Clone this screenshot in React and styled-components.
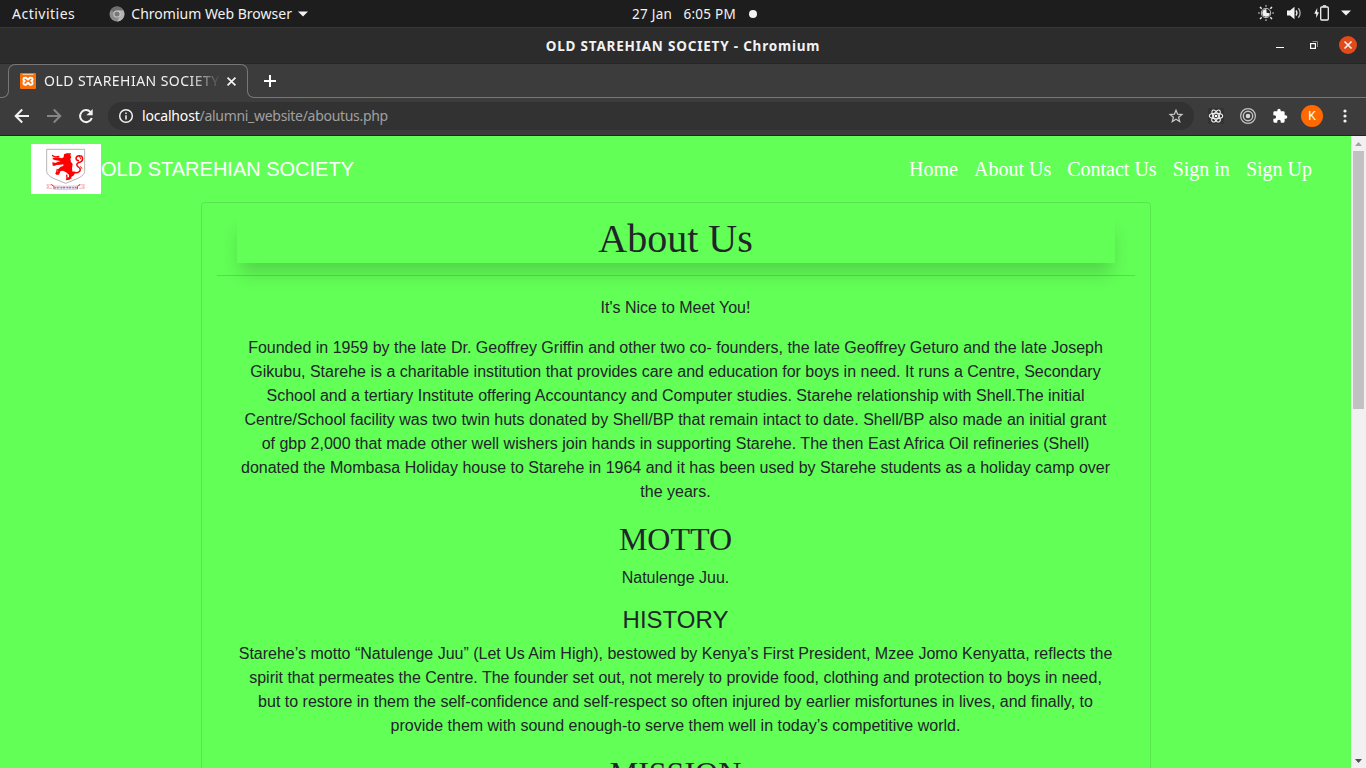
import React from "react";
import styled, { createGlobalStyle } from "styled-components";

const GREEN = "#62ff57";
const UI = '"Noto Sans", "Open Sans", sans-serif';
const SANS = '"Liberation Sans", Arial, sans-serif';
const SERIF = '"Liberation Serif", "Times New Roman", serif';

const GlobalStyle = createGlobalStyle`
  *, *::before, *::after { box-sizing: border-box; }
  body { margin: 0; overflow: hidden; background: #3c3c3c; }
`;

const Desktop = styled.div`
  width: 1366px;
  height: 768px;
  display: flex;
  flex-direction: column;
  overflow: hidden;
  font-family: ${UI};
`;

const Label = styled.span`
  font-size: ${(p) => p.$size || 14}px;
  letter-spacing: ${(p) => p.$track || 0}px;
  font-weight: ${(p) => (p.$bold ? 700 : 400)};
  color: ${(p) => p.$color || "#f2f2f2"};
  white-space: pre;
  line-height: 20px;
`;

const Svg = styled.svg`
  display: block;
  flex: none;
  overflow: visible;
`;

const SystemBar = styled.header`
  height: 28px;
  flex: none;
  display: grid;
  grid-template-columns: 1fr auto 1fr;
  align-items: center;
  background: #1d1d1d;
  border-bottom: 1px solid #373737;
  padding: 0 15px 0 12px;
`;

const AppMenu = styled.div`
  display: flex;
  align-items: center;
`;

const AppName = styled.div`
  display: flex;
  align-items: center;
  gap: 6px;
  margin-left: 34px;
`;

const Clock = styled.div`
  display: flex;
  align-items: center;
  gap: 13px;
  padding-left: 26px;
`;

const Dot = styled.i`
  width: 8px;
  height: 8px;
  border-radius: 50%;
  background: #f2f2f2;
`;

const Tray = styled.div`
  display: flex;
  align-items: center;
  justify-content: flex-end;
  gap: 12px;
  padding-bottom: 1px;
`;

const TitleBar = styled.div`
  height: 36px;
  flex: none;
  display: grid;
  grid-template-columns: 1fr auto 1fr;
  align-items: center;
  background: #2c2c2c;
  border-bottom: 1px solid #252525;
`;

const WindowControls = styled.div`
  display: flex;
  align-items: center;
  justify-content: flex-end;
  gap: 21px;
  padding: 0 9px 1px 0;
`;

const MinimizeButton = styled.div`
  margin-right: 5px;
`;

const CloseButton = styled.div`
  width: 18px;
  height: 18px;
  border-radius: 50%;
  background: #e24a19;
  display: grid;
  place-items: center;
`;

const TabStrip = styled.div`
  height: 34px;
  flex: none;
  display: flex;
  background: #3c3c3c;
`;

const TabFoot = styled.i`
  align-self: flex-end;
  flex: none;
  width: ${(p) => (p.$side === "left" ? 9 : 8)}px;
  height: 8px;
  border-bottom: 1px solid #777;
  border-${(p) => (p.$side === "left" ? "right" : "left")}: 1px solid #777;
  border-bottom-${(p) => (p.$side === "left" ? "right" : "left")}-radius: 7px;
`;

const Tab = styled.div`
  flex: none;
  width: 240px;
  height: 26px;
  margin: 0 -1px;
  border: 1px solid #777;
  border-bottom: 0;
  border-radius: 7px 7px 0 0;
`;

const TabContent = styled.div`
  height: 32px;
  display: flex;
  align-items: center;
  padding: 0 10px 0 11px;
`;

const TabTitle = styled.div`
  flex: none;
  display: flex;
  width: 176px;
  margin: 0 7px 0 8px;
  overflow: hidden;
  -webkit-mask-image: linear-gradient(to right, #000 145px, transparent 177px);
  mask-image: linear-gradient(to right, #000 145px, transparent 177px);
`;

const StripRest = styled.div`
  flex: 1;
  display: flex;
  align-items: center;
  padding-left: 9px;
  border-bottom: 1px solid #777;
`;

const Toolbar = styled.div`
  height: 38px;
  flex: none;
  display: flex;
  align-items: center;
  background: #3c3c3c;
  border-bottom: 1px solid #242424;
  padding: 0 19px 1px 14px;
`;

const NavButtons = styled.div`
  display: flex;
  gap: 16px;
  margin-right: 14px;
`;

const AddressBar = styled.div`
  flex: 1;
  height: 28px;
  border-radius: 14px;
  background: #323232;
  display: flex;
  align-items: center;
  padding: 0 10px;
`;

const Url = styled.div`
  flex: 1;
  display: flex;
  margin-left: 8px;
`;

const Extensions = styled.div`
  display: flex;
  align-items: center;
  gap: 16px;
  margin-left: 14px;
`;

const Avatar = styled.div`
  width: 22px;
  height: 22px;
  border-radius: 50%;
  background: #ff6900;
  color: #fff;
  font: 12px/22px Roboto, sans-serif;
  text-align: center;
  margin: 0 4px 0 -3px;
`;

const Viewport = styled.div`
  flex: 1;
  min-height: 0;
  display: flex;
`;

const Page = styled.main`
  flex: 1;
  overflow: hidden;
  background: ${GREEN};
  font: 16px/24px ${SANS};
  color: #212529;
`;

const Navbar = styled.nav`
  height: 66px;
  display: flex;
  align-items: center;
  padding: 0 39px 0 31px;
`;

const Logo = styled.div`
  width: 70px;
  height: 50px;
  background: #fff;
`;

const Brand = styled.div`
  flex: 1;
  font-size: 20px;
  line-height: 30px;
  color: #fff;
`;

const NavLinks = styled.div`
  display: flex;
  gap: 16px;
  font-family: ${SERIF};
  font-size: 20px;
  line-height: 30px;
  color: #fff;
`;

const Card = styled.section`
  width: 950px;
  height: 900px;
  margin: 0 auto;
  border: 1px solid rgba(0, 0, 0, 0.1);
  border-radius: 4px;
  padding: 12px 15px;
  text-align: center;
`;

const PageTitle = styled.h1`
  margin: 0 20px;
  font: 400 40px/48px ${SERIF};
  box-shadow: 0 13px 18px -3px rgba(0, 0, 0, 0.17);
`;

const Rule = styled.hr`
  margin: 12px 0 20px;
  border: 0;
  border-top: 1px solid rgba(0, 0, 0, 0.13);
`;

const Copy = styled.div`
  margin: 0 20px;
`;

const Paragraph = styled.p`
  margin: 0 0 16px;
`;

const Heading = styled.h2`
  margin: 0 0 8px;
  font: 400 32px/38.4px ${SERIF};
`;

const SubHeading = styled.h4`
  margin: 0 0 7px;
  font: 400 24px/28.8px ${SANS};
`;

const Scrollbar = styled.div`
  width: 15px;
  background: #f1f1f1;
  display: flex;
  flex-direction: column;
  align-items: center;
`;

const ScrollArrow = styled.div`
  height: 15px;
  display: grid;
  place-items: center;
`;

const ScrollThumb = styled.div`
  width: 11px;
  height: 258px;
  margin-bottom: auto;
  background: #c1c1c1;
`;

const Caret = () => (
  <Svg width="10" height="6" viewBox="0 0 10 6"><path d="M0 .5h10L5 5.5z" fill="#f2f2f2" /></Svg>
);

const ChromiumIcon = () => (
  <Svg width="16" height="16" viewBox="0 0 16 16">
    <circle cx="8" cy="8" r="7.5" fill="#8b8b8b" />
    <path d="M8 8 1.5 4.2A7.5 7.5 0 0 1 14.5 4.5H8z" fill="#6e6e6e" />
    <path d="M8 4.5h6.5A7.5 7.5 0 0 1 8 15.5L11 10z" fill="#b4b4b4" />
    <circle cx="8" cy="8" r="3.6" fill="#cfcfcf" />
    <circle cx="8" cy="8" r="2.6" fill="#777" />
  </Svg>
);

const NightLightIcon = () => (
  <Svg width="16" height="16" viewBox="0 0 16 16" fill="none">
    <path d="M8 0v1.8M8 14.2V16M0 8h1.8M14.2 8H16" stroke="#999" strokeWidth="1.6" />
    <path d="m2 2 1.7 1.7M14 2l-1.700 1.700M2 14l1.700-1.700M14 14l-1.700-1.700" stroke="#eee" strokeWidth="1.5" />
    <circle cx="8" cy="8" r="4.7" stroke="#c4c4c4" strokeWidth="1" />
    <path d="M8 8V4.200A3.800 3.800 0 1 0 11.800 8.800z" fill="#f2f2f2" />
    <path d="M8 4.500v3.700l3.500.5" stroke="#f2f2f2" strokeWidth="1" />
  </Svg>
);

const VolumeIcon = () => (
  <Svg width="16" height="14" viewBox="0 0 16 14" fill="none">
    <path d="M1 4.5h3L8.500.8v12.400L4 9.500H1z" fill="#f2f2f2" />
    <path d="M10 4.500a4 4 0 0 1 0 5" stroke="#f2f2f2" strokeWidth="1.3" />
    <path d="M12.300 2.300a7 7 0 0 1 0 9.400" stroke="#b5b5b5" strokeWidth="1.3" />
  </Svg>
);

const BatteryIcon = () => (
  <Svg width="15" height="16" viewBox="0 0 15 16" fill="none">
    <path d="M3.200 3 .2 8.800h2V13L5 7.300H3.200z" fill="#f2f2f2" />
    <rect x="6.700" y="2" width="7.600" height="13" rx="1" stroke="#f2f2f2" strokeWidth="1.3" />
    <path d="M8.800.9h3.400" stroke="#f2f2f2" strokeWidth="1.4" />
  </Svg>
);

const MinimizeIcon = () => (
  <Svg width="8" height="8" viewBox="0 0 8 8"><path d="M0 6h8v1H0z" fill="#fff" /></Svg>
);

const RestoreIcon = () => (
  <Svg width="8" height="8" viewBox="0 0 8 8" fill="none">
    <path d="M2.500.5h5v5.500" stroke="#8c8c8c" />
    <rect x=".6" y="2.600" width="4.800" height="4.800" stroke="#fff" strokeWidth="1.2" />
  </Svg>
);

const CloseIcon = ({ size, width }) => (
  <Svg width={size} height={size} viewBox="0 0 8 8">
    <path d="m.5.5 7 7M7.500.5l-7 7" stroke="#f4f4f4" strokeWidth={width} />
  </Svg>
);

const XamppIcon = () => (
  <Svg width="16" height="16" viewBox="0 0 16 16" fill="none">
    <rect width="16" height="16" rx="1" fill="#f96f08" />
    <path d="M2.500 1.500h11" stroke="#ffc48e" />
    <path d="M5 4.700C3 4.700 3 7 4.500 8 3 9 3 11.800 5 11.800h.5C7 11.800 7 9.800 8 9.800s1 2 2.500 2h.5c2 0 2-2.800.5-3.800 1.500-1 1.500-3.300-.5-3.300h-.5C9 4.700 9 6.500 8 6.500s-1-1.800-2.500-1.800z" stroke="#fff" strokeWidth="2" />
  </Svg>
);

const PlusIcon = () => (
  <Svg width="12" height="12" viewBox="0 0 12 12"><path d="M6 0v12M0 6h12" stroke="#fff" strokeWidth="2" /></Svg>
);

const ArrowIcon = ({ color, flip }) => (
  <Svg width="16" height="16" viewBox="0 0 16 16" fill="none">
    <path d={flip ? "M1 8h13M7.800 1.500 14.300 8l-6.500 6.500" : "M15 8H2M8.200 1.500 1.700 8l6.500 6.500"} stroke={color} strokeWidth="2" />
  </Svg>
);

const ReloadIcon = () => (
  <Svg width="16" height="16" viewBox="0 0 16 16" fill="none">
    <path d="M13.800 10A6 6 0 1 1 12.400 3.900" stroke="#f2f2f2" strokeWidth="2" />
    <path d="M14.700 1v6.300H8.400z" fill="#f2f2f2" />
  </Svg>
);

const InfoIcon = () => (
  <Svg width="16" height="16" viewBox="0 0 16 16" fill="none">
    <circle cx="8" cy="8" r="6.3" stroke="#f2f2f2" strokeWidth="1.5" />
    <path d="M8 7.200v4.200M8 4.400v1.500" stroke="#f2f2f2" strokeWidth="1.5" />
  </Svg>
);

const StarIcon = () => (
  <Svg width="16" height="16" viewBox="0 0 16 16" fill="none">
    <path d="m8 2.200 1.600 4 4.300.3-3.300 2.800 1.100 4.200L8 11.200l-3.700 2.300 1.100-4.200-3.300-2.800 4.300-.3z" stroke="#c4c4c4" strokeWidth="1.3" />
  </Svg>
);

const ReactIcon = () => (
  <Svg width="16" height="16" viewBox="0 0 16 16" fill="none">
    <rect width="16" height="16" fill="#333" />
    <g stroke="#f0f0f0" strokeWidth="1.1">
      <ellipse cx="8" cy="8" rx="6.7" ry="2.7" />
      <ellipse cx="8" cy="8" rx="6.7" ry="2.7" transform="rotate(60 8 8)" />
      <ellipse cx="8" cy="8" rx="6.7" ry="2.7" transform="rotate(120 8 8)" />
    </g>
    <circle cx="8" cy="8" r="1.3" fill="#fff" />
  </Svg>
);

const TargetIcon = () => (
  <Svg width="16" height="16" viewBox="0 0 16 16" fill="none" stroke="#c4c4c4">
    <circle cx="8" cy="8" r="7.4" strokeWidth="1.2" />
    <circle cx="8" cy="8" r="4.7" strokeWidth="1.4" />
    <circle cx="8" cy="8" r="2.3" fill="#d5d5d5" stroke="none" />
  </Svg>
);

const PuzzleIcon = () => (
  <Svg width="16" height="16" viewBox="0 0 24 24">
    <path d="M20.500 11H19V7a2 2 0 0 0-2-2h-4V3.500a2.500 2.500 0 0 0-5 0V5H4a2 2 0 0 0-2 2v3.800h1.500a2.700 2.700 0 0 1 0 5.400H2V20a2 2 0 0 0 2 2h3.800v-1.500a2.700 2.700 0 0 1 5.400 0V22H17a2 2 0 0 0 2-2v-4h1.500a2.500 2.500 0 0 0 0-5z" fill="#fff" />
  </Svg>
);

const MoreIcon = () => (
  <Svg width="4" height="14" viewBox="0 0 4 14" fill="#f2f2f2">
    <circle cx="2" cy="2" r="1.6" /><circle cx="2" cy="7" r="1.6" /><circle cx="2" cy="12" r="1.6" />
  </Svg>
);

const Crest = () => (
  <Svg width="70" height="50" viewBox="-27 0 210 150" fill="none">
    <path d="M20 16h114v66q0 11-20 21l-37 15-37-15q-20-10-20-21z" stroke="#8f8f8f" strokeWidth="2" />
    <path d="M72 31l8-3h13l-2 7 3 4-3 6 2 9 5 6-2 12 1 10 8 4-3 8-8 5-5 8-12 2 2-6 8-4 0-7-9-7-9-5-8 2-4 10-8 0-4-5 8-3 1-8 8-8 8-2 0-5-9 1-11 1-8 3-6-3 4-4 9-2 12-6-14-2-9-3 0-5 10 1 5-2 12 3 6-3z" fill="#f00" />
    <g stroke="#f00" strokeWidth="4">
      <path d="M36 34l10 5 12-2M37 57l11 2 8-5M52 75l-2 10 7 3M80 92l1 10M90 97l3 7" />
      <path d="M100 84q12 6 19-2 5-7-4-13-9-7 0-13 13-3 13-12-1-9-8-9-11-1-12 8 0 7 9 7" strokeWidth="4.5" />
      <path d="M118 36l5 10M121 67l5 7" strokeWidth="3" />
    </g>
    <path d="M20 123l18-1M20 132l16 1M20 123l6 5-6 4M134 123l-18-1M134 132l-16 1M134 123l-6 5 6 4" stroke="#ef8585" strokeWidth="2" />
    <path d="M34 122l8 5v8M120 122l-8 5v8" stroke="#e11d2b" strokeWidth="3" />
    <path d="M38 125q39 4 78 0M40 136q37 2 74 0" stroke="#eba9ae" strokeWidth="2" />
    <path d="M44 131h66" stroke="#8a84c4" strokeWidth="5" strokeDasharray="4 1.5 7 2 3 1" />
  </Svg>
);

const links = ["Home", "About Us", "Contact Us", "Sign in", "Sign Up"];

export default function App() {
  return (
    <Desktop>
      <GlobalStyle />
      <SystemBar>
        <AppMenu>
          <Label $size={14} $track={0.5}>Activities</Label>
          <AppName>
            <ChromiumIcon />
            <Label $size={14}>Chromium Web Browser</Label>
            <Caret />
          </AppName>
        </AppMenu>
        <Clock>
          <Label $size={13.5} $track={0.25}>27 Jan{"  "} 6:05 PM</Label>
          <Dot />
        </Clock>
        <Tray>
          <NightLightIcon />
          <VolumeIcon />
          <BatteryIcon />
          <Caret />
        </Tray>
      </SystemBar>
      <TitleBar>
        <span />
        <Label $bold $size={13.5} $track={0.8}>OLD STAREHIAN SOCIETY - Chromium</Label>
        <WindowControls>
          <MinimizeButton><MinimizeIcon /></MinimizeButton>
          <RestoreIcon />
          <CloseButton><CloseIcon size={8} width={1.6} /></CloseButton>
        </WindowControls>
      </TitleBar>
      <TabStrip>
        <TabFoot $side="left" />
        <Tab>
          <TabContent>
            <XamppIcon />
            <TabTitle><Label $size={14} $track={0.45}>OLD STAREHIAN SOCIETY</Label></TabTitle>
            <CloseIcon size={9} width={1.5} />
          </TabContent>
        </Tab>
        <TabFoot $side="right" />
        <StripRest><PlusIcon /></StripRest>
      </TabStrip>
      <Toolbar>
        <NavButtons>
          <ArrowIcon color="#f2f2f2" />
          <ArrowIcon color="#858585" flip />
          <ReloadIcon />
        </NavButtons>
        <AddressBar>
          <InfoIcon />
          <Url>
            <Label $size={14} $track={-0.18} $color="#fff">localhost</Label>
            <Label $size={14} $track={-0.3} $color="#a0a0a0">/alumni_website/aboutus.php</Label>
          </Url>
          <StarIcon />
        </AddressBar>
        <Extensions>
          <ReactIcon />
          <TargetIcon />
          <PuzzleIcon />
          <Avatar>K</Avatar>
          <MoreIcon />
        </Extensions>
      </Toolbar>
      <Viewport>
        <Page>
          <Navbar>
            <Logo><Crest /></Logo>
            <Brand>OLD STAREHIAN SOCIETY</Brand>
            <NavLinks>{links.map((l) => <span key={l}>{l}</span>)}</NavLinks>
          </Navbar>
          <Card>
            <PageTitle>About Us</PageTitle>
            <Rule />
            <Copy>
              <Paragraph>It's Nice to Meet You!</Paragraph>
              <Paragraph>
                Founded in 1959 by the late Dr. Geoffrey Griffin and other two co- founders, the late Geoffrey Geturo and the late Joseph
                Gikubu, Starehe is a charitable institution that provides care and education for boys in need. It runs a Centre, Secondary
                School and a tertiary Institute offering Accountancy and Computer studies. Starehe relationship with Shell.The initial
                Centre/School facility was two twin huts donated by Shell/BP that remain intact to date. Shell/BP also made an initial grant
                of gbp 2,000 that made other well wishers join hands in supporting Starehe. The then East Africa Oil refineries (Shell)
                donated the Mombasa Holiday house to Starehe in 1964 and it has been used by Starehe students as a holiday camp over
                the years.
              </Paragraph>
              <Heading>MOTTO</Heading>
              <Paragraph>Natulenge Juu.</Paragraph>
              <SubHeading>HISTORY</SubHeading>
              <Paragraph>
                Starehe’s motto “Natulenge Juu” (Let Us Aim High), bestowed by Kenya’s First President, Mzee Jomo Kenyatta, reflects the
                spirit that permeates the Centre. The founder set out, not merely to provide food, clothing and protection to boys in need,
                but to restore in them the self-confidence and self-respect so often injured by earlier misfortunes in lives, and finally, to
                provide them with sound enough-to serve them well in today’s competitive world.
              </Paragraph>
              <Heading>MISSION</Heading>
            </Copy>
          </Card>
        </Page>
        <Scrollbar>
          <ScrollArrow><Svg width="7" height="4" viewBox="0 0 7 4"><path d="M0 4 3.5 0 7 4z" fill="#a3a3a3" /></Svg></ScrollArrow>
          <ScrollThumb />
          <ScrollArrow><Svg width="7" height="4" viewBox="0 0 7 4"><path d="M0 0h7L3.5 4z" fill="#505050" /></Svg></ScrollArrow>
        </Scrollbar>
      </Viewport>
    </Desktop>
  );
}
